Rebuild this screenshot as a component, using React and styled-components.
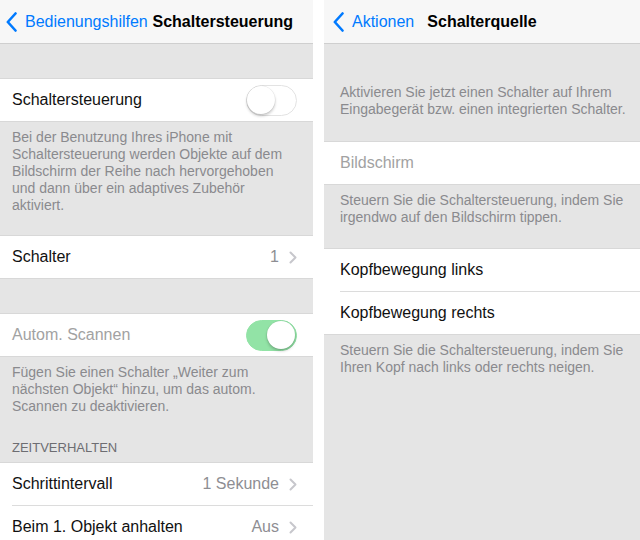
import React from "react";
import styled, { createGlobalStyle } from "styled-components";

const GlobalStyle = createGlobalStyle`
	html, body {
		margin: 0;
		padding: 0;
		background: #ffffff;
	}
	body {
		font-family: "Liberation Sans", Arial, sans-serif;
		-webkit-font-smoothing: antialiased;
	}
`;

const S = {
	Screen: styled.div`
		display: flex;
		gap: 11px;
		width: 640px;
		height: 540px;
		overflow: hidden;
		background: #ffffff;
	`,
	Panel: styled.div`
		display: flex;
		flex-direction: column;
		width: ${(p) => p.$width}px;
		flex-shrink: 0;
		height: 540px;
		overflow: hidden;
		background: #e5e5e5;
	`,
	NavBar: styled.div`
		display: ${(p) => (p.$centered ? "grid" : "flex")};
		grid-template-columns: 1fr auto 1fr;
		justify-content: space-between;
		align-items: center;
		height: 43px;
		flex-shrink: 0;
		padding: ${(p) => (p.$centered ? "0 9px" : "0 20px 0 6px")};
		background: #f7f7f7;
		border-bottom: 1px solid #cfcfcf;
	`,
	Back: styled.div`
		display: flex;
		align-items: center;
		gap: 8px;
		color: #007aff;
		font-size: 16px;
		line-height: 20px;
	`,
	NavTitle: styled.div`
		font-size: 16px;
		font-weight: bold;
		color: #000000;
		white-space: nowrap;
	`,
	Group: styled.div`
		margin-top: ${(p) => p.$top || 0}px;
		background: #ffffff;
		border-top: 1px solid #d8d8d8;
		border-bottom: 1px solid #d8d8d8;
		flex-shrink: 0;
	`,
	Row: styled.div`
		padding-left: ${(p) => p.$inset}px;
		& + & > div {
			border-top: 1px solid #dcdcdc;
		}
	`,
	RowInner: styled.div`
		display: flex;
		align-items: center;
		height: 42px;
		padding-right: 16px;
	`,
	Label: styled.span`
		flex: 1;
		font-size: 16px;
		color: ${(p) => (p.$dim ? "#a2a2a2" : "#111111")};
		white-space: nowrap;
	`,
	Value: styled.span`
		font-size: 16px;
		color: #8e8e93;
		margin-right: 10px;
		white-space: nowrap;
	`,
	Footer: styled.div`
		padding: ${(p) => p.$top || 7}px ${(p) => p.$right}px 0 ${(p) => p.$inset}px;
		font-size: 14px;
		line-height: 17px;
		color: #8a8a8e;
		flex-shrink: 0;
	`,
	Header: styled.div`
		padding: 24px 12px 6px;
		font-size: 13px;
		line-height: 17px;
		color: #6d6d72;
		text-transform: uppercase;
		flex-shrink: 0;
	`,
	Switch: styled.div`
		position: relative;
		width: 51px;
		height: 31px;
		box-sizing: border-box;
		border-radius: 16px;
		background: ${(p) => (p.$on ? "#92e3a6" : "#ffffff")};
		border: 1.5px solid ${(p) => (p.$on ? "#92e3a6" : "#e3e3e3")};
	`,
	Knob: styled.div`
		position: absolute;
		top: 0;
		left: ${(p) => (p.$on ? "20px" : "0")};
		width: 28px;
		height: 28px;
		border-radius: 50%;
		background: #ffffff;
		box-shadow: 0 2px 3px rgba(0, 0, 0, 0.22), 0 0 0 0.5px rgba(0, 0, 0, 0.08);
	`,
};

const BackChevron = () => (
	<svg width="11" height="20" viewBox="0 0 11 20">
		<path d="M9.5 1.5 L1.8 10 L9.5 18.5" fill="none" stroke="#007aff" strokeWidth="2.6" strokeLinecap="round" strokeLinejoin="round" />
	</svg>
);

const Chevron = () => (
	<svg width="8" height="13" viewBox="0 0 8 13">
		<path d="M1.5 1.5 L6.5 6.5 L1.5 11.5" fill="none" stroke="#c7c7cc" strokeWidth="2" strokeLinecap="round" strokeLinejoin="round" />
	</svg>
);

function Toggle({ on }) {
	return (
		<S.Switch $on={on}>
			<S.Knob $on={on} />
		</S.Switch>
	);
}

function Cell({ inset, label, dim, value, chevron, toggle }) {
	return (
		<S.Row $inset={inset}>
			<S.RowInner>
				<S.Label $dim={dim}>{label}</S.Label>
				{value && <S.Value>{value}</S.Value>}
				{chevron && <Chevron />}
				{toggle !== undefined && <Toggle on={toggle} />}
			</S.RowInner>
		</S.Row>
	);
}

function NavBar({ back, title, centered }) {
	return (
		<S.NavBar $centered={centered}>
			<S.Back>
				<BackChevron />
				<span>{back}</span>
			</S.Back>
			<S.NavTitle>{title}</S.NavTitle>
		</S.NavBar>
	);
}

function SwitchControl() {
	return (
		<S.Panel $width={313}>
			<NavBar back="Bedienungshilfen" title="Schaltersteuerung" />
			<S.Group $top={34}>
				<Cell inset={12} label="Schaltersteuerung" toggle={false} />
			</S.Group>
			<S.Footer $inset={12} $right={21}>
				Bei der Benutzung Ihres iPhone mit Schaltersteuerung werden Objekte auf dem Bildschirm der Reihe nach
				hervorgehoben und dann über ein adaptives Zubehör aktiviert.
			</S.Footer>
			<S.Group $top={21}>
				<Cell inset={12} label="Schalter" value="1" chevron />
			</S.Group>
			<S.Group $top={34}>
				<Cell inset={12} label="Autom. Scannen" dim toggle={true} />
			</S.Group>
			<S.Footer $inset={12} $right={21}>
				Fügen Sie einen Schalter „Weiter zum nächsten Objekt“ hinzu, um das autom. Scannen zu deaktivieren.
			</S.Footer>
			<S.Header>Zeitverhalten</S.Header>
			<S.Group>
				<Cell inset={12} label="Schrittintervall" value="1 Sekunde" chevron />
				<Cell inset={12} label="Beim 1. Objekt anhalten" value="Aus" chevron />
			</S.Group>
		</S.Panel>
	);
}

function SwitchSource() {
	return (
		<S.Panel $width={316}>
			<NavBar back="Aktionen" title="Schalterquelle" centered />
			<S.Footer $inset={16} $right={10} $top={40}>
				Aktivieren Sie jetzt einen Schalter auf Ihrem Eingabegerät bzw. einen integrierten Schalter.
			</S.Footer>
			<S.Group $top={23}>
				<Cell inset={16} label="Bildschirm" dim />
			</S.Group>
			<S.Footer $inset={16} $right={10}>
				Steuern Sie die Schaltersteuerung, indem Sie irgendwo auf den Bildschirm tippen.
			</S.Footer>
			<S.Group $top={22}>
				<Cell inset={16} label="Kopfbewegung links" />
				<Cell inset={16} label="Kopfbewegung rechts" />
			</S.Group>
			<S.Footer $inset={16} $right={10}>
				Steuern Sie die Schaltersteuerung, indem Sie Ihren Kopf nach links oder rechts neigen.
			</S.Footer>
		</S.Panel>
	);
}

export default function App() {
	return (
		<>
			<GlobalStyle />
			<S.Screen>
				<SwitchControl />
				<SwitchSource />
			</S.Screen>
		</>
	);
}
